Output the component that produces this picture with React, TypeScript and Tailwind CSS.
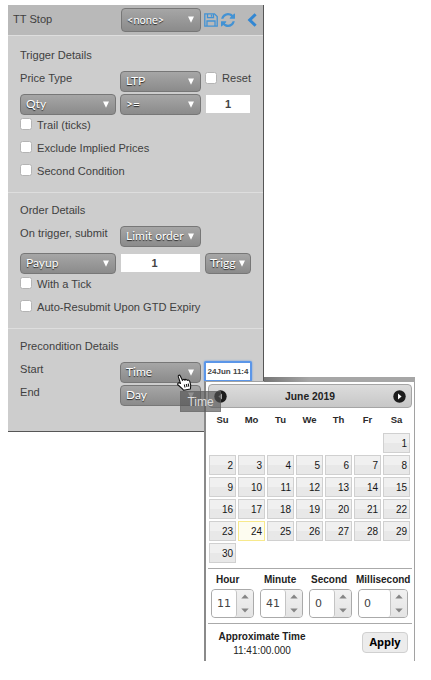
import React from "react";

function Label({ children, w }: { children: React.ReactNode; w?: string }) {
  return (
    <span className={`${w ?? ""} block h-[14px] whitespace-nowrap text-[11.1px] leading-[14px] text-[#3f3f3f]`}>
      {children}
    </span>
  );
}

function Select({ label, w, h = "h-[21px]", size = "text-[12px]", pad = "pl-[5px] pr-[6px]" }: { label: string; w: string; h?: string; size?: string; pad?: string }) {
  return (
    <button
      type="button"
      className={`${w} ${h} ${size} ${pad} flex shrink-0 items-center justify-between overflow-hidden rounded-[4px] border border-[#777] bg-linear-to-b from-[#a6a6a6] to-[#8b8b8b] font-['Lato',sans-serif] leading-[18px] text-white [text-shadow:0_1px_1px_#222]`}
    >
      <span className="mt-[-1px] whitespace-nowrap">{label}</span>
      <svg width="6" height="7" viewBox="0 0 6 7" className="mt-[-1px] shrink-0" fill="#fff">
        <path d="M0 0.5h6L3 6.8z" />
      </svg>
    </button>
  );
}

function Box() {
  return <span className="block size-[12px] shrink-0 rounded-[2.5px] border border-[#b4b4b4] bg-white" />;
}

function Check({ label }: { label: string }) {
  return (
    <div className="flex h-[23px] items-start gap-[5px]">
      <Box />
      <Label>{label}</Label>
    </div>
  );
}

function Field({ value, w }: { value: string; w: string }) {
  return (
    <span className={`${w} mt-[1px] flex h-[18px] shrink-0 items-center justify-center bg-white text-[11px] font-bold text-[#444]`}>
      {value}
    </span>
  );
}

function Spinner({ value, w }: { value: string; w: string }) {
  return (
    <div className={`${w} flex h-[29px] shrink-0 overflow-hidden rounded-[4px] border border-[#aaa] bg-[#ededed]`}>
      <span className="flex flex-1 items-center rounded-[3px] border-r border-[#c4c4c4] bg-white pl-[5px] pt-[1px] font-['DejaVu_Sans',sans-serif] text-[11px] text-[#444]">
        {value}
      </span>
      <span className="flex w-[16px] flex-col items-center justify-between bg-linear-to-b from-[#f1f1f1] to-[#e4e4e4] py-[4px]">
        <svg width="8" height="5" viewBox="0 0 8 5" fill="#858585"><path d="M0.3 4.6L4 0.4l3.7 4.2z" /></svg>
        <svg width="8" height="5" viewBox="0 0 8 5" fill="#858585"><path d="M0.3 0.4L4 4.6 7.7 0.4z" /></svg>
      </span>
    </div>
  );
}

function Arrow({ left }: { left?: boolean }) {
  return (
    <svg width="13" height="13" viewBox="0 0 13 13">
      <circle cx="6.5" cy="6.5" r="6.2" fill="#1c1c1c" />
      <path d={left ? "M8 3.4v6.2L4.4 6.5z" : "M5 3.4v6.2l3.6-3.1z"} fill={left ? "#aaa" : "#fff"} />
    </svg>
  );
}

const days = Array.from({ length: 30 }, (_, i) => i + 1);

function Calendar() {
  return (
    <div className="absolute left-[204px] top-[381px] h-[280px] w-[211px] border-l-2 border-r border-t border-[#a2a2a2] border-l-[#8a8a8a] bg-white px-[2px] pt-[2px]">
      <div className="absolute right-[-1px] top-[-5px] h-[5px] w-[151px] bg-linear-to-r from-[#777] to-[#a6a6a6] to-30%" />
      <div className="flex h-[24px] items-center justify-between rounded-[4px] border border-[#a5a5a5] bg-linear-to-b from-[#dcdcdc] to-[#c7c7c7] px-[5px] text-[10.3px] font-bold text-[#222]">
        <Arrow left />
        <span className="pt-[1px]">June 2019</span>
        <Arrow />
      </div>
      <div className="grid h-[25px] grid-cols-[repeat(7,29px)] items-center text-center text-[9.5px] font-bold text-[#2a2a2a]">
        {["Su", "Mo", "Tu", "We", "Th", "Fr", "Sa"].map((d) => (
          <span key={d}>{d}</span>
        ))}
      </div>
      <div className="grid grid-cols-[repeat(7,27px)] auto-rows-[20px] gap-[2px] pl-[1px]">
        {days.map((d) => (
          <span
            key={d}
            className={`${d === 1 ? "col-start-7" : ""} ${d === 24 ? "border-[#f7e98c] bg-[#fdfcf0]" : "border-[#d0d0d0] bg-linear-to-b from-[#f0f0f0] from-50% to-[#e8e8e8] to-50%"} flex items-center justify-end border pr-[2px] text-[10px] text-[#161616]`}
          >
            {d}
          </span>
        ))}
      </div>
      <div className="mt-[5px] flex h-[56px] flex-col border-y border-[#aaa]">
        <div className="flex h-[20px] items-center pl-[8px] text-[10px] font-bold text-[#222]">
          <span className="w-[48px]">Hour</span>
          <span className="w-[47px]">Minute</span>
          <span className="w-[45px]">Second</span>
          <span className="whitespace-nowrap">Millisecond</span>
        </div>
        <div className="flex pl-[3px]">
          <Spinner value="11" w="w-[43px] mr-[6px]" />
          <Spinner value="41" w="w-[43px] mr-[6px]" />
          <Spinner value="0" w="w-[43px] mr-[6px]" />
          <Spinner value="0" w="w-[50px]" />
        </div>
      </div>
      <div className="flex pt-[6px]">
        <div className="w-[108px] text-center text-[10px] leading-[14px] text-[#222]">
          <div className="whitespace-nowrap font-bold">Approximate Time</div>
          <div>11:41:00.000</div>
        </div>
        <div className="ml-[46px] mt-[2px] flex h-[21px] w-[46px] items-center justify-center rounded-[4px] border border-[#d0d0d0] bg-[#ececec] font-['Open_Sans',sans-serif] text-[11px] font-bold text-black">
          Apply
        </div>
      </div>
    </div>
  );
}

export default function App() {
  return (
    <div className="relative h-[680px] w-[431px] overflow-hidden bg-white pl-[8px] pt-[5px] font-['Liberation_Sans',Arial,sans-serif]">
      <div className="h-[427px] w-[256px] border-b border-r border-[#565656] bg-[#cdcdcd]">
        <div className="flex h-[30px] items-start bg-[#b9b9b9] pl-[5px] pt-[3px]">
          <Label w="w-[108px] mt-[4px]">TT Stop</Label>
          <Select label="<none>" w="w-[80px]" h="h-[24px]" size="text-[11px]" />
          <svg className="ml-[3px] mt-[5px]" width="14" height="14" viewBox="0 0 14 14" fill="none" stroke="#4292d4" strokeWidth="1.3">
            <path d="M0.8 0.8h9.7l2.7 2.7v9.7H0.8zM3.5 1v3.7h6V1M7.5 1.7v2.1M3 13V8h8v5" />
          </svg>
          <svg className="ml-[3px] mt-[5px]" width="14" height="14" viewBox="0 0 1536 1536" fill="#4292d4">
            <path d="M1511 928q0 5-1 7-64 268-268 434.500T764 1536q-146 0-282.500-55T238 1324l-129 129q-19 19-45 19t-45-19-19-45V960q0-26 19-45t45-19h448q26 0 45 19t19 45-19 45l-137 137q71 66 161 102t187 36q134 0 250-65t186-179q11-17 53-117 8-23 30-23h192q13 0 22.500 9.500t9.500 22.500zm25-800v448q0 26-19 45t-45 19h-448q-26 0-45-19t-19-45 19-45l138-138Q969 256 768 256q-134 0-250 65T332 500q-11 17-53 117-8 23-30 23H50q-13 0-22.500-9.500T18 608v-7q65-268 270-434.500T768 0q146 0 284 55.500T1297 212l130-129q19-19 45-19t45 19 19 45z" />
          </svg>
          <svg className="ml-[12px] mt-[5px]" width="10" height="14" viewBox="0 0 10 14" fill="none" stroke="#3287d3" strokeWidth="3">
            <path d="M8.6 1.2L2.7 7l5.900 5.800" />
          </svg>
        </div>

        <div className="h-[157px] border-t border-[#dedede] pl-[12px]">
          <div className="h-[35px] pt-[12px]"><Label>Trigger Details</Label></div>
          <div className="flex h-[23px] items-start">
            <Label w="w-[100px]">Price Type</Label>
            <Select label="LTP" w="w-[81px] mr-[4px]" />
            <div className="flex items-center gap-[5px]">
              <Box />
              <Label>Reset</Label>
            </div>
          </div>
          <div className="flex h-[24px] items-start">
            <Select label="Qty" w="w-[96px] mr-[4px]" />
            <Select label=">=" w="w-[81px] mr-[5px]" />
            <Field value="1" w="w-[44px]" />
          </div>
          <Check label="Trail (ticks)" />
          <Check label="Exclude Implied Prices" />
          <Check label="Second Condition" />
        </div>

        <div className="h-[136px] border-t border-[#dedede] pl-[12px]">
          <div className="h-[33px] pt-[10px]"><Label>Order Details</Label></div>
          <div className="flex h-[27px] items-start">
            <Label w="w-[100px]">On trigger, submit</Label>
            <Select label="Limit order" w="w-[81px]" />
          </div>
          <div className="flex h-[24px] items-start">
            <Select label="Payup" w="w-[96px] mr-[5px]" />
            <Field value="1" w="w-[79px] mr-[5px] pr-[12px]" />
            <Select label="Trigg" w="w-[46px]" pad="pl-[4px] pr-[5px]" />
          </div>
          <Check label="With a Tick" />
          <Check label="Auto-Resubmit Upon GTD Expiry" />
        </div>

        <div className="border-t border-[#dedede] pl-[12px]">
          <div className="h-[33px] pt-[10px]"><Label>Precondition Details</Label></div>
          <div className="flex h-[23px] items-start">
            <Label w="w-[100px]">Start</Label>
            <Select label="Time" w="w-[81px] mr-[3px]" />
            <span className="mt-[-1px] flex h-[21px] w-[48px] items-center justify-center overflow-hidden whitespace-nowrap rounded-[2px] border-2 border-[#5b96e8] bg-white pt-[1px] text-[8px] font-bold text-[#444] shadow-[0_0_2px_#5b96e8]">
              24Jun 11:4
            </span>
          </div>
          <div className="flex h-[23px] items-start">
            <Label w="w-[100px]">End</Label>
            <Select label="Day" w="w-[81px]" />
          </div>
        </div>
      </div>

      <Calendar />

      <div className="absolute left-[180px] top-[391px] flex h-[21px] w-[41px] items-center justify-center border border-[#666]/40 bg-[#555]/65 text-[12px] text-[#ddd]">
        Time
      </div>
      <svg className="absolute left-[176px] top-[374px]" width="16" height="17" viewBox="0 0 16 17" fill="#fff" stroke="#111" strokeWidth="1.1" strokeLinejoin="round">
        <path d="M4.5 9.500L2.300 2.700C1.900 1.200 3.600 0.500 4.300 1.900L6.500 6.600C6.500 5.200 8.400 5 8.900 6.300C9.300 5 11 5.200 11.300 6.500C12 5.600 13.500 6.200 13.800 7.500L14.600 10.700C14.900 12.200 14.500 13 14.400 15L7.600 16.200C6.500 14.200 4.100 13 2 11C0.900 9.800 2.200 8.400 3.600 9.100Z" />
        <path d="M8.300 10.500l.7 3M10.300 10l.7 3M12.200 9.600l.6 3" fill="none" />
      </svg>
    </div>
  );
}
